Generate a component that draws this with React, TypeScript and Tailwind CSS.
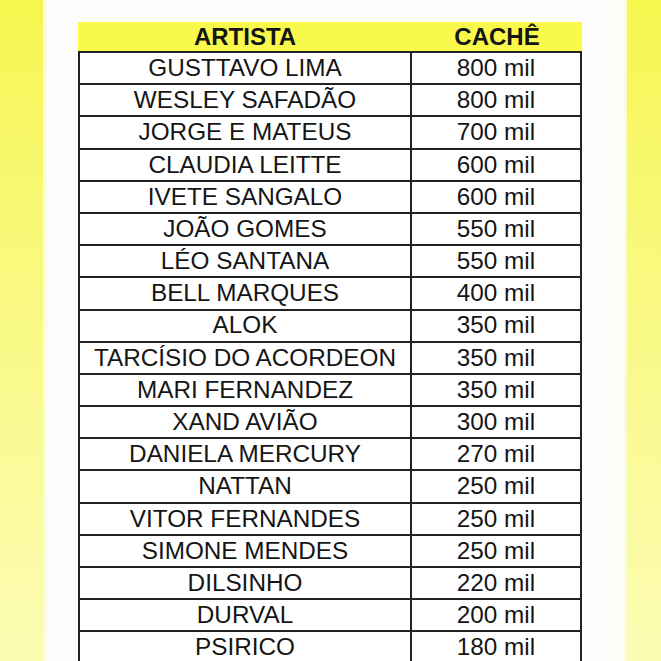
const rows: [string, string][] = [
  ["GUSTTAVO LIMA", "800 mil"],
  ["WESLEY SAFADÃO", "800 mil"],
  ["JORGE E MATEUS", "700 mil"],
  ["CLAUDIA LEITTE", "600 mil"],
  ["IVETE SANGALO", "600 mil"],
  ["JOÃO GOMES", "550 mil"],
  ["LÉO SANTANA", "550 mil"],
  ["BELL MARQUES", "400 mil"],
  ["ALOK", "350 mil"],
  ["TARCÍSIO DO ACORDEON", "350 mil"],
  ["MARI FERNANDEZ", "350 mil"],
  ["XAND AVIÃO", "300 mil"],
  ["DANIELA MERCURY", "270 mil"],
  ["NATTAN", "250 mil"],
  ["VITOR FERNANDES", "250 mil"],
  ["SIMONE MENDES", "250 mil"],
  ["DILSINHO", "220 mil"],
  ["DURVAL", "200 mil"],
  ["PSIRICO", "180 mil"],
];

export default function App() {
  return (
    <div
      className="flex h-[661px] w-[661px] overflow-hidden text-[#151515]"
      style={{ fontFamily: '"Liberation Sans", Arial, sans-serif' }}
    >
      <div className="w-[43px] shrink-0 bg-gradient-to-b from-[#f6f64e] via-[#f9f986] to-[#fcfcb4]" />
      <div className="w-[6px] shrink-0 bg-gradient-to-r from-[#fbfbd0] to-[#fdfdfb]" />
      <div className="flex-1 bg-[#fdfdfb] pl-[29px] pt-[22px]">
        <div className="w-[504px]">
          <div className="grid h-[29px] grid-cols-[334px_170px] items-center bg-[#f9f94c] text-[24px] font-bold leading-none">
            <div className="text-center">ARTISTA</div>
            <div className="text-center">CACHÊ</div>
          </div>
          <div className="border-x-2 border-[#222]">
            {rows.map(([name, fee]) => (
              <div
                key={name}
                className="grid h-[32.2px] grid-cols-[332px_168px] border-t-2 border-[#222] bg-white text-[24.3px] leading-none"
              >
                <div className="flex items-center justify-center border-r-2 border-[#222]">{name}</div>
                <div className="flex items-center justify-center">{fee}</div>
              </div>
            ))}
          </div>
        </div>
      </div>
      <div className="w-[6px] shrink-0 bg-gradient-to-r from-[#fdfdfb] to-[#fbfbd0]" />
      <div className="w-[34px] shrink-0 bg-gradient-to-b from-[#f6f64e] via-[#f9f986] to-[#fcfcb4]" />
    </div>
  );
}
